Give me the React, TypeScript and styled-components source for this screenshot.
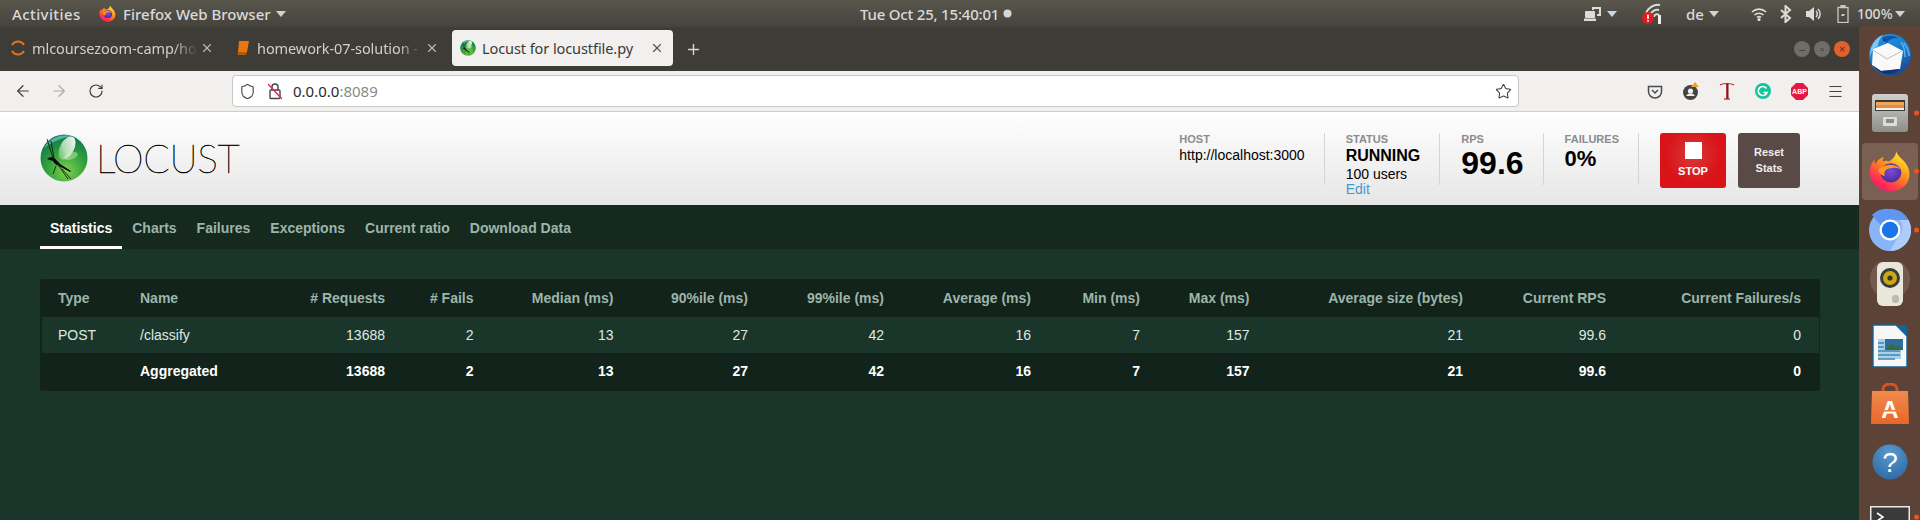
import React from 'react';
import styled, { createGlobalStyle } from 'styled-components';
import { ArrowLeft, ArrowRight, RotateCw, Star, Shield, Plus, X, Menu } from 'lucide-react';

const Global = createGlobalStyle`
  html, body { margin: 0; padding: 0; background: #1a362b; }
  * { box-sizing: border-box; }
`;

const Screen = styled.div`
  width: 1920px; height: 520px; overflow: hidden; display: flex; flex-direction: column;
  font-family: "Liberation Sans", Arial, sans-serif;
`;
const TopBar = styled.div`
  height: 27px; flex: none; display: flex; align-items: center;
  background: linear-gradient(#59564c, #45433c);
  font-family: "Noto Sans", sans-serif; font-size: 15px; font-weight: 500; color: #d8dadb;
`;
const TopText = styled.span<{ $ml?: number; $w?: number; $ls?: number }>`
  margin-left: ${p => p.$ml ?? 0}px; white-space: nowrap; display: inline-block; flex: none;
  letter-spacing: ${p => p.$ls ?? 0}px;
  ${p => (p.$w ? `width:${p.$w}px;` : '')}
`;
const Battery = styled(TopText)`
  font-size: 14px; word-spacing: -3px; letter-spacing: -0.2px;
`;
const Caret = styled.span<{ $ml?: number; $c?: string }>`
  margin-left: ${p => p.$ml ?? 0}px; width: 0; height: 0; flex: none;
  border-left: 5px solid transparent; border-right: 5px solid transparent;
  border-top: 6px solid ${p => p.$c ?? '#d2d2ce'};
`;
const TopIcon = styled.svg<{ $ml?: number }>`
  margin-left: ${p => p.$ml ?? 0}px; flex: none; display: block;
`;
const Middle = styled.div`
  flex: 1; min-height: 0; display: flex;
`;
const Browser = styled.div`
  width: 1859px; flex: none; display: flex; flex-direction: column;
`;
const TabStrip = styled.div`
  height: 44px; flex: none; display: flex; align-items: center; background: #3d3c36; padding: 0 7px 0 2px; gap: 4px;
  font-family: "Noto Sans", sans-serif; font-size: 14.5px;
`;
const Tab = styled.div<{ $active?: boolean }>`
  width: 221px; height: 36px; margin-top: -3px; flex: none; display: flex; align-items: center; padding-left: 8px; border-radius: 4px;
  background: ${p => (p.$active ? '#f1f0ee' : 'transparent')};
  color: ${p => (p.$active ? '#3a3a38' : '#d0cfc9')};
`;
const TabTitle = styled.span<{ $fade?: boolean }>`
  margin-left: 6px; width: 166px; overflow: hidden; white-space: nowrap; letter-spacing: -0.08px;
  ${p => (p.$fade ? 'mask-image: linear-gradient(90deg, #000 85%, transparent);' : '')}
`;
const TabClose = styled(X)`
  margin-left: 2px; flex: none; color: inherit; opacity: .85;
`;
const WinBtn = styled.span<{ $c: string; $ml?: number }>`
  width: 16px; height: 16px; border-radius: 50%; flex: none; background: ${p => p.$c}; margin-left: ${p => p.$ml ?? 4}px;
  display: flex; align-items: center; justify-content: center; color: #3a3a36;
  font-family: "Liberation Sans", sans-serif; font-size: 11px; line-height: 1;
`;
const NavBar = styled.div`
  height: 41px; flex: none; display: flex; align-items: center; background: #f1f0ee; border-bottom: 1px solid #cfcecb; color: #3c3c3a;
`;
const UrlBox = styled.div`
  width: 1287px; height: 32px; margin-left: 128px; flex: none; display: flex; align-items: center;
  background: #fff; border: 1px solid #c9c8c5; border-radius: 4px; padding-left: 6px;
`;
const Url = styled.span`
  margin-left: 11px; font-family: "Noto Sans", sans-serif; font-size: 15px; color: #2a2a2a; width: 1202px; flex: none;
  span { color: #8a8a88; }
`;
const Slot = styled.span<{ $ml: number }>`
  margin-left: ${p => p.$ml}px; flex: none; display: flex; align-items: center; justify-content: center;
`;
const Head = styled.header`
  height: 93px; flex: none; display: flex; align-items: flex-start; justify-content: space-between;
  background: linear-gradient(#fff, #e6e6e6); padding: 21px 59px 0 40px;
`;
const Brand = styled.div`
  display: flex; align-items: center; gap: 8px; height: 50px;
`;
const BrandName = styled.span`
  font-family: Lato, sans-serif; font-weight: 100; font-size: 39px; letter-spacing: -0.4px; color: #000; line-height: 1;
  -webkit-text-stroke: 0.45px #000;
`;
const Stats = styled.div`
  display: flex; align-items: flex-start;
`;
const Stat = styled.div`
  height: 52px; padding: 0 19px 0 21px; border-right: 1px solid #d4d4d4; color: #000;
`;
const Label = styled.div`
  font-size: 11px; font-weight: 700; color: #8c8c8c; line-height: 12px; height: 13px;
`;
const Host = styled.div`
  font-size: 14px; line-height: 16px; margin-top: 1px;
`;
const Running = styled.div`
  font-size: 16px; font-weight: 700; line-height: 18px; margin-top: 1px;
`;
const Users = styled.div`
  font-size: 14px; line-height: 16px; margin-top: 1px;
`;
const EditLink = styled.div`
  font-size: 14px; line-height: 15px; color: #4a97c9; white-space: nowrap;
`;
const Big = styled.div`
  font-size: 32px; font-weight: 700; line-height: 34px;
`;
const Mid = styled.div`
  font-size: 22px; font-weight: 700; line-height: 24px; margin-top: 1px;
`;
const StopBtn = styled.div`
  width: 66px; height: 55px; margin-left: 21px; border-radius: 3px; display: flex; flex-direction: column; align-items: center;
  background: radial-gradient(circle at 50% 40%, #d83a3a, #d91318 60%); color: #fff; font-size: 11px; font-weight: 700; padding-top: 9px;
`;
const StopSquare = styled.span`
  width: 17px; height: 17px; background: #fff; margin-bottom: 6px;
`;
const ResetBtn = styled.div`
  width: 62px; height: 55px; margin-left: 12px; border-radius: 3px; background: #5a4a47; color: #f1eeee; font-size: 11px; font-weight: 700;
  line-height: 16px; text-align: center; padding-top: 11px;
`;
const Nav = styled.nav`
  height: 44px; flex: none; background: #15291f; display: flex; padding-left: 40px;
`;
const NavItem = styled.a<{ $active?: boolean }>`
  padding: 0 10px; line-height: 46px; height: 44px; font-size: 14px; font-weight: 700;
  color: ${p => (p.$active ? '#fff' : '#9db5a9')};
  border-bottom: 3px solid ${p => (p.$active ? '#fff' : 'transparent')};
`;
const Content = styled.main`
  flex: 1; background: #1a362b; padding: 30px 39px 0 40px;
`;
const TableWrap = styled.div`
  background: #12231b; border-radius: 3px; padding: 0 1px 0 2px; height: 112px;
`;
const Table = styled.table`
  border-collapse: collapse; table-layout: fixed; width: 1777px; font-size: 14px;
`;
const Th = styled.th<{ $left?: boolean; $w: number }>`
  width: ${p => p.$w}px; height: 38px; padding: 0 18px 0 ${p => (p.$left ? 16 : 0)}px; font-weight: 700; color: #9db5a9;
  text-align: ${p => (p.$left ? 'left' : 'right')}; white-space: nowrap;
`;
const Row = styled.tr<{ $total?: boolean }>`
  background: ${p => (p.$total ? 'transparent' : '#1a362b')};
  color: ${p => (p.$total ? '#fff' : '#dfe8e3')};
  font-weight: ${p => (p.$total ? 700 : 400)};
`;
const Td = styled.td<{ $left?: boolean }>`
  height: 36px; padding: 0 18px 0 ${p => (p.$left ? 16 : 0)}px; text-align: ${p => (p.$left ? 'left' : 'right')};
`;
const Dock = styled.aside`
  flex: 1; background: #5d4337; display: flex; flex-direction: column; margin-top: -1px;
`;
const DockItem = styled.div<{ $active?: boolean; $top?: number; $bottom?: number }>`
  height: 58.2px; flex: none; position: relative; display: flex; align-items: center; justify-content: center;
  padding-top: ${p => p.$top ?? 0}px; padding-bottom: ${p => p.$bottom ?? 0}px;
  &::before {
    content: ''; display: ${p => (p.$active ? 'block' : 'none')}; position: absolute; left: 3px; right: 2px; top: 1px; bottom: 1px;
    background: #7a6053; border-radius: 4px;
  }
  svg { position: relative; flex: none; }
`;
const Dots = styled.span`
  position: absolute; right: 1px; top: 50%; transform: translateY(-50%); display: flex; flex-direction: column; gap: 3px;
`;
const Dot = styled.i`
  display: block; width: 5px; height: 5px; border-radius: 50%; background: #e95420;
`;

const Firefox = ({ s }: { s: number }) => (
  <svg width={s} height={s} viewBox="0 0 48 48">
    <defs>
      <linearGradient id="ffa" x1="0.75" y1="0.1" x2="0.2" y2="0.95">
        <stop offset="0" stopColor="#ffe226" /><stop offset=".4" stopColor="#ff8a1e" /><stop offset=".75" stopColor="#ff3a4e" /><stop offset="1" stopColor="#f5156c" />
      </linearGradient>
      <radialGradient id="ffb" cx=".5" cy=".4" r=".6">
        <stop offset="0" stopColor="#7a4fd8" /><stop offset="1" stopColor="#4c2a9a" />
      </radialGradient>
    </defs>
    <path d="M31 1c1 5 6 8 10 13 4 5 6 11 5 17-2 10-11 16-22 16C11 47 1 37 1 25c0-6 2-10 5-14 0 3 1 4 2 5 1-4 5-7 9-8-1 2-2 4-1 5 2-1 5-1 7 0 4-3 8-6 8-12z" fill="url(#ffa)" />
    <ellipse cx="25" cy="26" rx="12" ry="11" fill="url(#ffb)" />
    <path d="M11 22c4-4 9-5 14-5 5 0 9 2 11 5-5-2-9-2-13-1-5 1-6 5-5 9-4-1-7-4-7-8z" fill="#ff9a1f" />
  </svg>
);
const LocustGlobe = ({ s }: { s: number }) => (
  <svg width={s} height={s} viewBox="0 0 48 48">
    <defs>
      <radialGradient id="lg" cx=".55" cy=".78" r=".85">
        <stop offset="0" stopColor="#7fd14d" /><stop offset=".5" stopColor="#2f9f3c" /><stop offset=".85" stopColor="#137a4e" /><stop offset="1" stopColor="#3b9f92" />
      </radialGradient>
      <linearGradient id="lw" x1="0.7" y1="0" x2="0.2" y2="1">
        <stop offset="0" stopColor="#fff" stopOpacity=".95" /><stop offset=".6" stopColor="#e0f3d8" stopOpacity=".75" /><stop offset="1" stopColor="#b8e0a8" stopOpacity=".35" />
      </linearGradient>
    </defs>
    <circle cx="24" cy="24" r="23.5" fill="url(#lg)" />
    <path d="M4 14C10 4 20 0 31 2 22 4 12 8 4 14z" fill="#74c4bb" opacity=".75" />
    <ellipse cx="27" cy="14" rx="7" ry="12.500" transform="rotate(28 27 14)" fill="url(#lw)" />
    <ellipse cx="31" cy="22" rx="7" ry="3.500" transform="rotate(-18 31 22)" fill="#d8f0c8" opacity=".45" />
    <path d="M7 25c2-2 5-2 7-1 2 1 4 4 6 6l11 7-1 1-11-6c-3-1-5-3-6-5-2-1-4-1-6-2z" fill="#0a0a0a" />
    <path d="M7 5l6 19M11 7l3 17M16 32l-3 8M22 35l9 10M19 32l9 13" stroke="#0a0a0a" strokeWidth=".8" fill="none" />
  </svg>
);
const Thunderbird = () => (
  <svg width="44" height="44" viewBox="0 0 44 44">
    <defs>
      <linearGradient id="tb" x1="0.3" y1="0" x2="0.8" y2="1"><stop offset="0" stopColor="#1f93df" /><stop offset=".6" stopColor="#1c6fc4" /><stop offset="1" stopColor="#173f8a" /></linearGradient>
    </defs>
    <circle cx="22" cy="22" r="21" fill="url(#tb)" />
    <path d="M2 24C1 13 8 4 15 2c-3 3-5 7-5 11C6 15 3 19 2 24z" fill="#7cc6ef" />
    <path d="M14 5c5-3 12-3 16 0-5 0-9 1-11 5-2-1-4-3-5-5z" fill="#0e56a8" />
    <circle cx="16" cy="7" r="1.1" fill="#0a2a55" />
    <path d="M36 10c3 4 5 8 5 13M33 9c3 4 4 9 4 15" stroke="#5db2ea" strokeWidth="1.5" fill="none" />
    <path d="M5 16l15-6 15 8-3 18-19 2-9-6z" fill="#f9f9f7" />
    <path d="M5 17l14 9 15-8" stroke="#bdbdbd" strokeWidth="1" fill="none" />
    <path d="M4 32l9 6 19-2-3 3c-7 4-17 3-25-7z" fill="#15356f" />
  </svg>
);
const Cabinet = () => (
  <svg width="38" height="40" viewBox="0 0 38 40">
    <defs><linearGradient id="cb" x1="0" y1="0" x2="0" y2="1"><stop offset="0" stopColor="#cfcfcb" /><stop offset="1" stopColor="#8e8e8a" /></linearGradient></defs>
    <rect x="1" y="1" width="36" height="38" rx="3" fill="url(#cb)" />
    <rect x="4" y="7" width="30" height="11" fill="#3d3a36" />
    <rect x="5" y="9" width="28" height="3" fill="#f0a45a" /><rect x="5" y="12" width="28" height="3" fill="#e98b3c" />
    <rect x="5" y="15" width="28" height="2" fill="#f1f1ed" />
    <rect x="12" y="24" width="14" height="9" rx="1" fill="#dcdcd8" /><rect x="15" y="26" width="8" height="4" fill="#8b8b87" />
  </svg>
);
const Chrome = () => (
  <svg width="44" height="44" viewBox="0 0 44 44">
    <circle cx="22" cy="22" r="21" fill="#8ab4f8" />
    <path d="M22 1a21 21 0 0 1 18.5 11H22a10 10 0 0 0-9 5.5L4 7A21 21 0 0 1 22 1z" fill="#5e97f1" />
    <path d="M40.5 12A21 21 0 0 1 22 43l9-16a10 10 0 0 0 0-15z" fill="#aecbfa" />
    <circle cx="22" cy="22" r="10.5" fill="#fff" /><circle cx="22" cy="22" r="8.2" fill="#1a73e8" />
  </svg>
);
const Speaker = () => (
  <svg width="44" height="46" viewBox="0 0 44 46">
    <circle cx="22" cy="17" r="20" fill="#8a7268" opacity=".5" />
    <rect x="9" y="0" width="26" height="44" rx="6" fill="#e9e7dc" />
    <circle cx="22" cy="16" r="10" fill="#3c3c38" /><circle cx="22" cy="16" r="7" fill="#c9a914" /><circle cx="22" cy="16" r="2.6" fill="#3a3320" />
    <rect x="24" y="33" width="7" height="8" rx="3" fill="#bdbbb0" />
  </svg>
);
const Writer = () => (
  <svg width="36" height="44" viewBox="0 0 36 44">
    <path d="M1 1h23l11 11v31H1z" fill="#f7f7f5" stroke="#14618f" strokeWidth="1.4" />
    <path d="M24 1h11v11z" fill="#14639b" />
    <rect x="6" y="15" width="23" height="20" fill="#6fb2d8" opacity=".55" />
    <rect x="13" y="15" width="18" height="11" fill="#2c6f9d" /><path d="M13 26l6-6 5 3 3-2 4 5z" fill="#3e6a3a" />
    <path d="M6 19h6M6 23h6M6 27h22M6 31h22M6 35h17" stroke="#3c88b8" strokeWidth="1.4" />
  </svg>
);
const Store = () => (
  <svg width="40" height="42" viewBox="0 0 40 42">
    <defs><linearGradient id="st" x1="0" y1="0" x2="0" y2="1"><stop offset="0" stopColor="#f08a4c" /><stop offset="1" stopColor="#e8672a" /></linearGradient></defs>
    <path d="M13 9V6c0-3 3-5 7-5s7 2 7 5v3" stroke="#d9531e" strokeWidth="3" fill="none" />
    <path d="M2 8h36l1 33H1z" fill="url(#st)" />
    <text x="20" y="35" textAnchor="middle" fontFamily="Liberation Sans, sans-serif" fontWeight="700" fontSize="24" fill="#fff">A</text>
    <rect x="7" y="27" width="26" height="1.6" fill="#ee7a3c" />
  </svg>
);
const Help = () => (
  <svg width="36" height="36" viewBox="0 0 36 36">
    <defs><radialGradient id="hp" cx=".5" cy=".25" r=".8"><stop offset="0" stopColor="#5a9ad0" /><stop offset="1" stopColor="#2c6aa0" /></radialGradient></defs>
    <circle cx="18" cy="18" r="17.5" fill="url(#hp)" />
    <text x="18" y="28" textAnchor="middle" fontFamily="Liberation Sans, sans-serif" fontSize="28" fill="#fff">?</text>
  </svg>
);
const Terminal = () => (
  <svg width="40" height="40" viewBox="0 0 40 40">
    <rect x="0.5" y="0.5" width="39" height="39" rx="1" fill="#3a3a3a" stroke="#e8e8e4" strokeWidth="2" />
    <path d="M7 7l6 4-6 4" stroke="#fff" strokeWidth="1.6" fill="none" />
  </svg>
);

const cols: [string, number, boolean?][] = [
  ['Type', 82, true], ['Name', 147, true], ['# Requests', 132], ['# Fails', 88.5], ['Median (ms)', 140],
  ['90%ile (ms)', 134.5], ['99%ile (ms)', 136], ['Average (ms)', 147], ['Min (ms)', 109], ['Max (ms)', 109.5],
  ['Average size (bytes)', 213.5], ['Current RPS', 143], ['Current Failures/s', 195],
];
const rowA = ['POST', '/classify', '13688', '2', '13', '27', '42', '16', '7', '157', '21', '99.6', '0'];
const rowB = ['', 'Aggregated', '13688', '2', '13', '27', '42', '16', '7', '157', '21', '99.6', '0'];

export default function App() {
  return (
    <Screen>
      <Global />
      <TopBar>
        <TopText $ml={12} $w={68} $ls={0.4}>Activities</TopText>
        <Slot $ml={19}><Firefox s={17} /></Slot>
        <TopText $ml={7} $w={148}>Firefox Web Browser</TopText>
        <Caret $ml={5} />
        <TopText $ml={574} $w={139} $ls={-0.2}>Tue Oct 25, 15:40:01</TopText>
        <TopIcon $ml={4} width="9" height="9" viewBox="0 0 9 9"><circle cx="4.5" cy="4.5" r="4" fill="#d6d6d2" /></TopIcon>
        <TopIcon $ml={572} width="20" height="16" viewBox="0 0 20 16" fill="#dcdcd8">
          <rect x="1" y="5" width="10" height="7" rx="1" /><rect x="0" y="12.5" width="12" height="2.5" />
          <path d="M8 1h9v9h-4V8h2V3H10v1H8z" />
        </TopIcon>
        <Caret $ml={3} $c="#c9d8e8" />
        <TopIcon $ml={23} width="26" height="22" viewBox="0 0 26 22">
          <path d="M6 10a13 13 0 0 1 14-8M10 12a8 8 0 0 1 9-5M14 14a3 3 0 0 1 5-2" stroke="#dcdcd8" strokeWidth="2" fill="none" />
          <rect x="18" y="12" width="3" height="9" fill="#ececec" />
          <circle cx="8" cy="15" r="6" fill="#e01b24" /><rect x="7.2" y="11.5" width="1.6" height="4.5" fill="#fff" /><rect x="7.2" y="17" width="1.6" height="1.6" fill="#fff" />
        </TopIcon>
        <TopText $ml={20} $w={19}>de</TopText>
        <Caret $ml={4} />
        <TopIcon $ml={32} width="16" height="14" viewBox="0 0 16 14" fill="none" stroke="#dcdcd8" strokeWidth="1.6">
          <path d="M1 5a10 10 0 0 1 14 0M3.5 8a6.5 6.5 0 0 1 9 0M6 10.5a3 3 0 0 1 4 0" /><circle cx="8" cy="12.5" r=".8" fill="#dcdcd8" />
        </TopIcon>
        <TopIcon $ml={13} width="12" height="18" viewBox="0 0 12 18" fill="none" stroke="#dcdcd8" strokeWidth="2">
          <path d="M1 5l9 8-4.5 4V1L10 5l-9 8" />
        </TopIcon>
        <TopIcon $ml={13} width="18" height="16" viewBox="0 0 18 16" fill="#dcdcd8">
          <path d="M1 5h3l5-4v14l-5-4H1z" /><path d="M11 5a4 4 0 0 1 0 6M13 3a7 7 0 0 1 0 10" stroke="#dcdcd8" strokeWidth="1.5" fill="none" />
        </TopIcon>
        <TopIcon $ml={14} width="12" height="18" viewBox="0 0 12 18" fill="none" stroke="#c9c9c5" strokeWidth="1.3">
          <rect x="1" y="2.5" width="10" height="15" /><rect x="4" y=".5" width="4" height="2" fill="#c9c9c5" /><path d="M7 5L4 11h3l-2 4 3-6H5z" fill="#c9c9c5" stroke="none" />
        </TopIcon>
        <Battery $ml={8} $w={33}>100 %</Battery>
        <Caret $ml={5} />
      </TopBar>
      <Middle>
        <Browser>
          <TabStrip>
            <Tab>
              <svg width="16" height="16" viewBox="0 0 16 16" fill="none" stroke="#e8701a" strokeWidth="2"><path d="M2 5a7 7 0 0 1 12 0M2 11a7 7 0 0 0 12 0" /></svg>
              <TabTitle $fade>mlcoursezoom-camp/homework</TabTitle>
              <TabClose size={14} />
            </Tab>
            <Tab>
              <svg width="16" height="16" viewBox="0 0 16 16"><path d="M4 1h10l-2 11H3z" fill="#e8770f" /><path d="M3 12h9l-1 3H2.500z" fill="#b55a0a" /></svg>
              <TabTitle $fade>homework-07-solution - Jupyter</TabTitle>
              <TabClose size={14} />
            </Tab>
            <Tab $active>
              <LocustGlobe s={16} />
              <TabTitle>Locust for locustfile.py</TabTitle>
              <TabClose size={14} />
            </Tab>
            <Slot $ml={8}><Plus size={17} color="#d8d7d2" /></Slot>
            <Slot $ml={1084}>
              <WinBtn $c="#6e6d69">–</WinBtn>
              <WinBtn $c="#6e6d69">▫</WinBtn>
              <WinBtn $c="#e2602c">×</WinBtn>
            </Slot>
          </TabStrip>
          <NavBar>
            <Slot $ml={14}><ArrowLeft size={18} strokeWidth={1.6} /></Slot>
            <Slot $ml={18}><ArrowRight size={18} strokeWidth={1.6} color="#aaa" /></Slot>
            <Slot $ml={20}><RotateCw size={16} strokeWidth={1.7} /></Slot>
            <UrlBox>
              <Shield size={17} strokeWidth={1.5} />
              <Slot $ml={12}>
                <svg width="14" height="17" viewBox="0 0 14 17" fill="none" stroke="#444" strokeWidth="1.4">
                  <rect x="2" y="7" width="10" height="8.500" rx="1" /><path d="M4 7V4a3 3 0 0 1 6 0v3" /><path d="M0 1l14 15" stroke="#e0245e" />
                </svg>
              </Slot>
              <Url>0.0.0.0<span>:8089</span></Url>
              <Star size={17} strokeWidth={1.5} />
            </UrlBox>
            <Slot $ml={128}>
              <svg width="16" height="15" viewBox="0 0 16 15" fill="none" stroke="#4a4a4a" strokeWidth="1.5"><path d="M1.500 2.500h13v5a6.500 6.500 0 0 1-13 0z" /><path d="M5 6l3 3 3-3" /></svg>
            </Slot>
            <Slot $ml={18.5}>
              <svg width="19" height="19" viewBox="0 0 19 19"><circle cx="8.500" cy="10.500" r="7.500" fill="#444" /><circle cx="8.500" cy="9" r="2.600" fill="#eee" /><path d="M4 14a5 5 0 0 1 9 0z" fill="#eee" /><path d="M13 0l4 5h-8z" fill="#f0a030" /></svg>
            </Slot>
            <Slot $ml={18.5}>
              <svg width="16" height="18" viewBox="0 0 16 18" fill="none" stroke="#b32020" strokeWidth="1.2"><path d="M1 3c3-2 11-2 14 0M8 2v15" /><path d="M8.500 2v15" stroke="#8e1414" strokeWidth="2" /><path d="M5 17h6" /></svg>
            </Slot>
            <Slot $ml={20}>
              <svg width="16" height="16" viewBox="0 0 16 16"><circle cx="8" cy="8" r="8" fill="#15c39a" /><path d="M11.500 5.500a4.500 4.500 0 1 0 .5 4H8.500" stroke="#fff" strokeWidth="1.7" fill="none" /></svg>
            </Slot>
            <Slot $ml={19.5}>
              <svg width="17" height="17" viewBox="0 0 17 17"><path d="M5 0h7l5 5v7l-5 5H5l-5-5V5z" fill="#e8173f" /><text x="8.500" y="11" textAnchor="middle" fontSize="7" fontWeight="700" fontFamily="Liberation Sans, sans-serif" fill="#fff">ABP</text></svg>
            </Slot>
            <Slot $ml={19}><Menu size={17} strokeWidth={1.4} /></Slot>
          </NavBar>
          <Head>
            <Brand>
              <LocustGlobe s={48} />
              <BrandName>LOCUST</BrandName>
            </Brand>
            <Stats>
              <Stat><Label>HOST</Label><Host>http://localhost:3000</Host></Stat>
              <Stat>
                <Label>STATUS</Label><Running>RUNNING</Running><Users>100 users</Users><EditLink>Edit</EditLink>
              </Stat>
              <Stat><Label>RPS</Label><Big>99.6</Big></Stat>
              <Stat><Label>FAILURES</Label><Mid>0%</Mid></Stat>
              <StopBtn><StopSquare />STOP</StopBtn>
              <ResetBtn>Reset<br />Stats</ResetBtn>
            </Stats>
          </Head>
          <Nav>
            <NavItem $active>Statistics</NavItem>
            <NavItem>Charts</NavItem>
            <NavItem>Failures</NavItem>
            <NavItem>Exceptions</NavItem>
            <NavItem>Current ratio</NavItem>
            <NavItem>Download Data</NavItem>
          </Nav>
          <Content>
            <TableWrap>
              <Table>
                <thead>
                  <tr>{cols.map(c => <Th key={c[0]} $w={c[1]} $left={c[2]}>{c[0]}</Th>)}</tr>
                </thead>
                <tbody>
                  <Row>{rowA.map((v, i) => <Td key={i} $left={i < 2}>{v}</Td>)}</Row>
                  <Row $total>{rowB.map((v, i) => <Td key={i} $left={i < 2}>{v}</Td>)}</Row>
                </tbody>
              </Table>
            </TableWrap>
          </Content>
        </Browser>
        <Dock>
          <DockItem><Thunderbird /></DockItem>
          <DockItem><Cabinet /><Dots><Dot /></Dots></DockItem>
          <DockItem $active><Firefox s={42} /><Dots><Dot /></Dots></DockItem>
          <DockItem><Chrome /><Dots><Dot /></Dots></DockItem>
          <DockItem $bottom={5}><Speaker /></DockItem>
          <DockItem><Writer /></DockItem>
          <DockItem><Store /></DockItem>
          <DockItem><Help /></DockItem>
          <DockItem $top={10}><Terminal /><Dots><Dot /><Dot /></Dots></DockItem>
        </Dock>
      </Middle>
    </Screen>
  );
}
